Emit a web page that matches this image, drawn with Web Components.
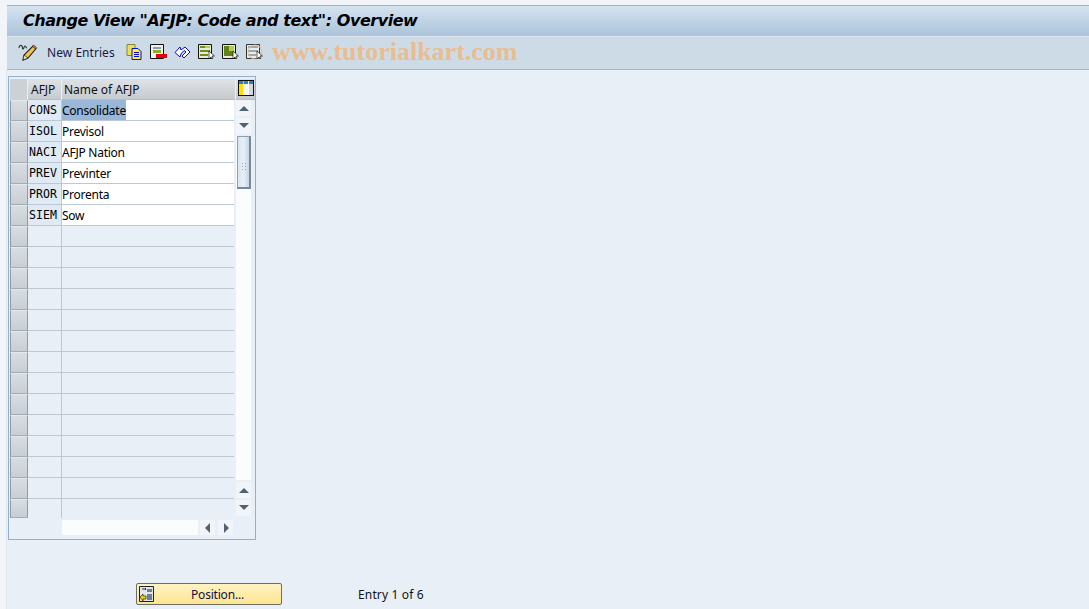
<!DOCTYPE html>
<html>
<head>
<meta charset="utf-8">
<title>Change View</title>
<style>
  html, body { margin: 0; height: 100%; }
  body { background: #f1f4f9; overflow: hidden; font: 12px "Noto Sans", sans-serif; }
</style>
</head>
<body>
<sap-screen>
  <sap-title slot="title">Change View "AFJP: Code and text": Overview</sap-title>
  <sap-toolbar slot="toolbar"></sap-toolbar>
  <sap-table></sap-table>
  <sap-footer slot="footer"></sap-footer>
</sap-screen>

<script>
// page frame: light strip on top and on the left, then the bars and the work area
class SapScreen extends HTMLElement {
    constructor() {
        super();
        this.attachShadow({ mode: "open" });
    }

    connectedCallback() {
        this.shadowRoot.innerHTML = `
            <style>
                :host {
                    display: flex;
                    flex-direction: column;
                    height: 609px;
                    width: 1089px;
                    padding-top: 5px;
                    box-sizing: border-box;
                }
                .bars { display: block; margin-left: 7px; }
                .work {
                    flex: 1;
                    margin-left: 6px;
                    background: #e8eff7;
                    border-left: 1px solid #e2e8f0;
                    padding: 6px 0 0 1px;
                    display: flex;
                    flex-direction: column;
                    align-items: flex-start;
                }
            </style>
            <div class="bars">
                <slot name="title"></slot>
                <slot name="toolbar"></slot>
            </div>
            <div class="work">
                <slot></slot>
                <slot name="footer"></slot>
            </div>
        `;
    }
}

class SapTitle extends HTMLElement {
    constructor() {
        super();
        this.attachShadow({ mode: "open" });
    }

    connectedCallback() {
        this.shadowRoot.innerHTML = `
            <style>
                :host {
                    display: flex;
                    align-items: center;
                    height: 31px;
                    box-sizing: border-box;
                    padding: 0 0 1px 16px;
                    border-top: 1px solid #a5b1bf;
                    background: linear-gradient(#d5e3ef, #abc3da);
                    color: #000;
                    font: italic bold 16px "DejaVu Sans", sans-serif;
                    letter-spacing: -0.46px;
                    white-space: nowrap;
                }
            </style>
            <slot></slot>
        `;
    }
}

const ICONS = {
    pencil: `<svg width="20" height="18" viewBox="0 0 20 18">
        <path d="M1 5c0-3 2-3 3-2s0 3 1 3 1-3 2-3 1 2 2 2" fill="none" stroke="#333" stroke-width="1.100"/>
        <path d="M15 3l3 2.500-8 9.500-5 2 1-5z" fill="#f5c542" stroke="#222" stroke-width="1.100"/>
        <path d="M14.500 3.500l3 2.500 1-1.500-3-2.500z" fill="#e8763a" stroke="#222" stroke-width=".6"/>
        <path d="M5 17l1-5 4 3z" fill="#f3e2c0" stroke="#222" stroke-width=".7"/>
    </svg>`,
    copy: `<svg width="17" height="16" viewBox="0 0 17 16">
        <path d="M1 .5h8v11H1z" fill="#eadf5a" stroke="#8a8240"/>
        <path d="M6 4.500h6l3 3v8H6z" fill="#ffee2e" stroke="#0a0ac8"/>
        <path d="M8 8.500h5M8 10.500h5M8 12.500h5" stroke="#0a0ac8"/>
    </svg>`,
    del: `<svg width="17" height="16" viewBox="0 0 17 16">
        <path d="M.5 .5h13v14H.5z" fill="#eef2f5" stroke="#111"/>
        <path d="M3 3h8v2H3z" fill="#8aa0b0"/><path d="M3 6h8v3H3z" fill="#8fae2a"/>
        <path d="M6 10h11v4H6z" fill="#e8000e"/>
    </svg>`,
    undo: `<svg width="17" height="16" viewBox="0 0 17 16">
        <path d="M1 8.500L6 3l1 3 4-3 5 5-6 6-2-2 4-4-2-1.500L7 10l-1 3z" fill="#fff" stroke="#0a0ac8" stroke-linejoin="round"/>
    </svg>`,
    select: `<svg width="17" height="16" viewBox="0 0 17 16">
        <path d="M.5 .5h13v14H.5z" fill="#e7ecd8" stroke="#111"/>
        <path d="M2 2h10v2H2zM2 6h10v2H2zM2 10h8v2H2z" fill="#6f8f20"/>
        <path d="M7 2h5v2H7z" fill="#b7cc46"/>
        <path d="M11 7v8l2-2 1 2 1-1-1-2h2.500z" fill="#fff" stroke="#111" stroke-width=".7"/>
    </svg>`,
    block: `<svg width="17" height="16" viewBox="0 0 17 16">
        <path d="M.5 .5h13v14H.5z" fill="#e7ecd8" stroke="#111"/>
        <path d="M2 2h10v10H2z" fill="#5f8218"/>
        <path d="M7 2h5v5H7z" fill="#b7cc46"/>
        <path d="M11 7v8l2-2 1 2 1-1-1-2h2.500z" fill="#fff" stroke="#111" stroke-width=".7"/>
    </svg>`,
    deselect: `<svg width="17" height="16" viewBox="0 0 17 16" style="overflow:visible">
        <path d="M.5 .5h13v14H.5z" fill="#e9edf0" stroke="#333"/>
        <path d="M2 2h10v2H2zM2 6h10v2H2zM2 10h8v2H2z" fill="#9aa8b2"/>
        <circle cx="9" cy="8" r="7" fill="none" stroke="#e9bd8f" stroke-width="1.200" opacity=".8"/>
        <path d="M11 7v8l2-2 1 2 1-1-1-2h2.500z" fill="#fff" stroke="#111" stroke-width=".7"/>
    </svg>`
};

class SapToolbar extends HTMLElement {
    constructor() {
        super();
        this.attachShadow({ mode: "open" });
    }

    connectedCallback() {
        this.shadowRoot.innerHTML = `
            <style>
                :host {
                    display: flex;
                    align-items: center;
                    height: 34px;
                    box-sizing: border-box;
                    padding: 0 0 2px 11px;
                    background: #cddbe7;
                    border-top: 1px solid #dfe8f0;
                    border-bottom: 1px solid #a8b4c0;
                    color: #1a1a4a;
                    white-space: nowrap;
                }
                svg { display: block; flex: none; }
                .label {
                    width: 67px;
                    margin: 0 12px 0 9px;
                    font: 12px "Noto Sans", sans-serif;
                    letter-spacing: 0.05px;
                }
                .icons { display: flex; align-items: center; gap: 7px; }
                .mark {
                    margin-left: 9px;
                    font: bold 26px "Liberation Serif", serif;
                    color: #e9bd8f;
                }
            </style>
            ${ICONS.pencil}
            <span class="label">New Entries</span>
            <div class="icons">
                ${ICONS.copy}${ICONS.del}${ICONS.undo}${ICONS.select}${ICONS.block}${ICONS.deselect}
            </div>
            <span class="mark">www.tutorialkart.com</span>
        `;
    }
}

class SapRow extends HTMLElement {
    constructor() {
        super();
        this.attachShadow({ mode: "open" });
    }

    connectedCallback() {
        const code = this.getAttribute("code") || "";
        const name = this.getAttribute("name") || "";
        const filled = this.hasAttribute("code");
        const picked = this.hasAttribute("picked");
        this.shadowRoot.innerHTML = `
            <style>
                :host {
                    display: grid;
                    grid-template-columns: 18px 34px 1fr;
                    grid-template-rows: 100%;
                    height: 21px;
                }
                :host([last]) { height: 19px; }
                :host([last]) .code, :host([last]) .name { border-bottom: 0; }
                .sel {
                    box-sizing: border-box;
                    background: linear-gradient(#d8dde2, #c8ced4);
                    border: 1px solid #a4adb6;
                    border-top-color: #e4e8ec;
                    border-left-color: #8f9aa5;
                    border-right-color: #8f9aa5;
                }
                .code {
                    box-sizing: border-box;
                    background: ${filled ? "#dfeaf5" : "transparent"};
                    border-right: 1px solid #bcc8d4;
                    border-bottom: 1px solid #bcc8d4;
                    padding: 1px 0 0 1px;
                    color: #000;
                    font: 11.6px/19px "DejaVu Sans Mono", monospace;
                }
                .name {
                    box-sizing: border-box;
                    overflow: hidden;
                    background: ${filled ? "#fff" : "transparent"};
                    border-bottom: 1px solid #bcc8d4;
                    font: 12px/20px "Noto Sans", sans-serif;
                    color: #000;
                }
                .hit {
                    background: ${picked ? "#9ab7d8" : "transparent"};
                    display: inline-block;
                    vertical-align: top;
                    height: 20px;
                    letter-spacing: -0.25px;
                }
                .hit span { position: relative; top: 1px; }
            </style>
            <div class="sel"></div>
            <div class="code">${code}</div>
            <div class="name"><div class="hit"><span>${name}</span></div></div>
        `;
    }
}

class SapTable extends HTMLElement {
    constructor() {
        super();
        this.attachShadow({ mode: "open" });
    }

    connectedCallback() {
        const data = [
            ["CONS", "Consolidate"], ["ISOL", "Previsol"], ["NACI", "AFJP Nation"],
            ["PREV", "Previnter"], ["PROR", "Prorenta"], ["SIEM", "Sow"]
        ];
        let rows = "";
        for (let i = 0; i < 20; i++) {
            if (data[i]) {
                rows += `<sap-row code="${data[i][0]}" name="${data[i][1]}"${i === 0 ? " picked" : ""}></sap-row>`;
            } else {
                rows += `<sap-row${i === 19 ? " last" : ""}></sap-row>`;
            }
        }
        this.shadowRoot.innerHTML = `
            <style>
                :host {
                    display: block;
                    width: 248px;
                    height: 464px;
                    box-sizing: border-box;
                    border: 1px solid #8fb0cf;
                    padding: 2px 0 0 1px;
                    background: #e8eff7;
                }
                .head {
                    display: grid;
                    grid-template-columns: 18px 34px 1fr 19px;
                    height: 21px;
                    width: 245px;
                    box-sizing: border-box;
                    background: linear-gradient(#dfe2e5, #c6cbd0);
                    border-bottom: 1px solid #b4bcc4;
                    font: 12px/21px "Noto Sans", sans-serif;
                    letter-spacing: -0.03px;
                    color: #111;
                }
                .head div { box-sizing: border-box; border-right: 1px solid #eef1f4; padding-left: 2px; }
                .head .c0 { background: #ccd1d6; padding: 0; }
                .head .c1 { padding-left: 3px; }
                .head .c3 { border: 0; padding: 0 0 0 2px; }
                .body { display: flex; height: 418px; }
                .rows { width: 225px; height: 418px; overflow: hidden; }
                .vbar {
                    width: 20px;
                    height: 416px;
                    box-sizing: border-box;
                    padding-left: 1px;
                    background: #e8eff7;
                    display: flex;
                    flex-direction: column;
                    gap: 2px;
                    margin-left: 1px;
                }
                .btn {
                    width: 15px;
                    height: 16px;
                    background: #f1f5f9;
                    display: flex;
                    align-items: center;
                    justify-content: center;
                    flex: none;
                }
                .track { flex: 1; background: #fafcfd; width: 15px; position: relative; }
                .thumb {
                    position: absolute;
                    left: 1px;
                    top: 0;
                    width: 14px;
                    height: 53px;
                    box-sizing: border-box;
                    background: linear-gradient(90deg, #d8e5f1, #e8f0f7 50%, #c6d6e4);
                    border: 1px solid #8d9ead;
                    border-right: 2px solid #77889a;
                    border-bottom: 2px solid #77889a;
                    display: flex;
                    align-items: center;
                    justify-content: center;
                }
                .grip {
                    width: 6px;
                    height: 9px;
                    margin-top: 8px;
                    background: radial-gradient(circle, #9aa8b4 0.9px, transparent 1px) 0 0 / 3px 3px;
                }
                .foot { display: flex; margin: 2px 0 0 52px; gap: 2px; }
                .hbar { width: 136px; height: 15px; background: #fafcfd; }
                .foot .btn { width: 15px; height: 15px; }
                .foot .btn + .btn { margin-left: 1px; }
            </style>
            <div class="head">
                <div class="c0"></div>
                <div class="c1">AFJP</div>
                <div>Name of AFJP</div>
                <div class="c3">
                    <svg width="16" height="17" viewBox="0 0 16 17" style="display:block;margin-top:1px">
                        <rect x=".5" y=".5" width="15" height="15" fill="#fff" stroke="#111"/>
                        <rect x="1" y="1" width="4.500" height="3" fill="#2f7fce"/>
                        <rect x="6" y="1" width="4" height="3" fill="#2f7fce"/>
                        <rect x="11" y="1" width="4" height="3" fill="#2f7fce"/>
                        <rect x="1" y="4" width="4.500" height="11" fill="#ffe000"/>
                        <rect x="6" y="4" width="4" height="11" fill="#f4f6f8"/>
                        <rect x="11" y="4" width="4" height="11" fill="#d2d8de"/>
                    </svg>
                </div>
            </div>
            <div class="body">
                <div class="rows">${rows}</div>
                <div class="vbar">
                    <div class="btn"><svg width="10" height="6"><path d="M0 6L5 1l5 5z" fill="#4f6172"/></svg></div>
                    <div class="btn"><svg width="10" height="6"><path d="M0 0h10L5 5z" fill="#4f6172"/></svg></div>
                    <div class="track"><div class="thumb"><div class="grip"></div></div></div>
                    <div class="btn"><svg width="10" height="6"><path d="M0 6L5 1l5 5z" fill="#4f6172"/></svg></div>
                    <div class="btn"><svg width="10" height="6"><path d="M0 0h10L5 5z" fill="#4f6172"/></svg></div>
                </div>
            </div>
            <div class="foot">
                <div class="hbar"></div>
                <div class="btn"><svg width="6" height="10"><path d="M5 0v10L0 5z" fill="#4f6172"/></svg></div>
                <div class="btn"><svg width="6" height="10"><path d="M1 0v10l5-5z" fill="#4f6172"/></svg></div>
            </div>
        `;
    }
}

class SapFooter extends HTMLElement {
    constructor() {
        super();
        this.attachShadow({ mode: "open" });
    }

    connectedCallback() {
        this.shadowRoot.innerHTML = `
            <style>
                :host {
                    display: flex;
                    align-items: center;
                    margin: 43px 0 0 128px;
                    height: 22px;
                    font: 12px "Noto Sans", sans-serif;
                    color: #111;
                }
                .btn {
                    width: 146px;
                    height: 22px;
                    box-sizing: border-box;
                    display: flex;
                    align-items: center;
                    border: 1px solid #6f6f60;
                    border-radius: 2px;
                    background: linear-gradient(#fff3c4, #fde58f);
                    padding-left: 2px;
                    color: #10104a;
                }
                .btn span { flex: 1; text-align: center; letter-spacing: -0.2px; }
                svg { display: block; flex: none; }
                .info { margin-left: 76px; letter-spacing: 0.15px; }
            </style>
            <div class="btn">
                <svg width="15" height="16" viewBox="0 0 15 16">
                    <path d="M.5 .5h14v15H.5z" fill="#dfe6ec" stroke="#222"/>
                    <path d="M8 3h5v3H8zM8 8h5v6H8z" fill="#6f7f8e"/>
                    <path d="M6 2l1 1-1 1M3 3h3" stroke="#333" fill="none"/>
                    <path d="M1 11l3-3v2h3v3H4v2z" fill="#f5d60a" stroke="#222" stroke-width=".7"/>
                </svg>
                <span>Position...</span>
            </div>
            <span class="info">Entry 1 of 6</span>
        `;
    }
}

customElements.define("sap-screen", SapScreen);
customElements.define("sap-title", SapTitle);
customElements.define("sap-toolbar", SapToolbar);
customElements.define("sap-row", SapRow);
customElements.define("sap-table", SapTable);
customElements.define("sap-footer", SapFooter);
</script>
</body>
</html>
